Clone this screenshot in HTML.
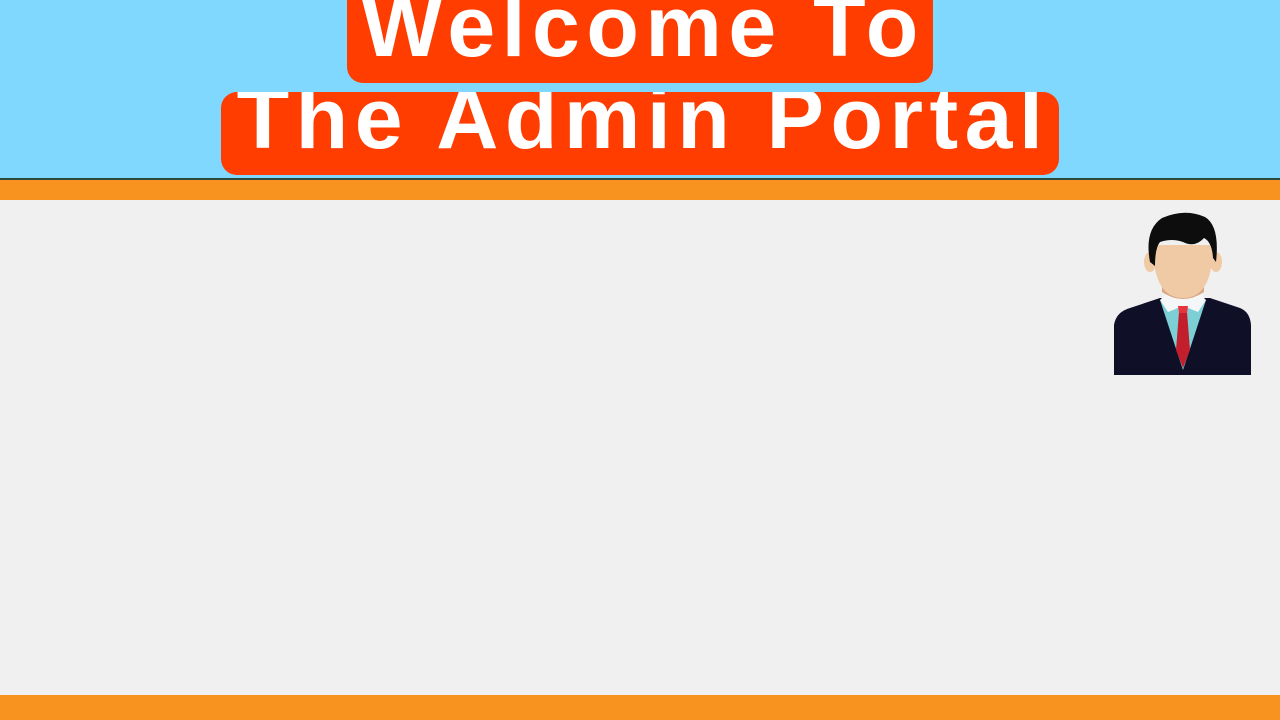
<!DOCTYPE html>
<html><head><style>
body{margin:0;width:1280px;height:720px;background:#f0f0f0;position:relative;overflow:hidden;font-family:"Liberation Sans",Arial,sans-serif}
.hdr{position:absolute;left:0;top:0;width:1280px;height:178px;background:#80d8ff}
.line{position:absolute;left:0;top:178px;width:1280px;height:2px;background:#2a4a40}
.or1{position:absolute;left:0;top:180px;width:1280px;height:20px;background:#f7931e}
.or2{position:absolute;left:0;top:695px;width:1280px;height:25px;background:#f7931e}
.box{position:absolute;background:#ff3d00;border-radius:16px;color:#fff;font-weight:bold;font-size:86px;letter-spacing:6.5px;text-align:center;white-space:nowrap;line-height:1;overflow:hidden}
.t{position:absolute;left:0;right:0}
</style></head><body>
<div class="hdr"></div>
<div class="box" style="left:347px;top:0;width:586px;height:83px;border-radius:0 0 16px 16px"><span class="t" style="top:-16px;padding-left:6px">Welcome To</span></div>
<div class="box" style="left:221px;top:92px;width:838px;height:83px"><span class="t" style="top:-16px;padding-left:6px">The Admin Portal</span></div>
<div class="line"></div>
<div class="or1"></div>
<div class="or2"></div>
<svg style="position:absolute;left:1100px;top:200px" width="170" height="190" viewBox="0 0 170 190">
<path d="M14 125 Q16 112 30 108 L60 98 L110 98 L140 108 Q150 112 151 125 L151 175 L14 175 Z" fill="#0f1028"/>
<path d="M60 100 L83 170 L106 100 Z" fill="#7dcfd6"/>
<path d="M60 100 L68 92 L98 92 L106 100 L98 112 L83 106 L68 112 Z" fill="#f4f6f8"/>
<path d="M79 112 L87 112 L90 150 L83 168 L76 150 Z" fill="#c21e2c"/>
<path d="M78 106 L88 106 L87 113 L79 113 Z" fill="#e8343a"/>
<path d="M62 70 L62 92 Q83 106 104 92 L104 70 Z" fill="#d9a782"/>
<ellipse cx="50" cy="62" rx="6" ry="10" fill="#f0caa5"/>
<ellipse cx="116" cy="62" rx="6" ry="10" fill="#f0caa5"/>
<path d="M53 45 Q53 98 83 98 Q113 98 113 45 Z" fill="#f0caa5"/>
<path d="M50 62 Q44 30 62 18 Q85 8 105 17 Q120 26 116 62 L113 58 Q112 42 104 38 Q95 48 83 42 Q72 38 60 42 Q55 48 55 66 Z" fill="#0d0d0d"/>
</svg>
</body></html>
